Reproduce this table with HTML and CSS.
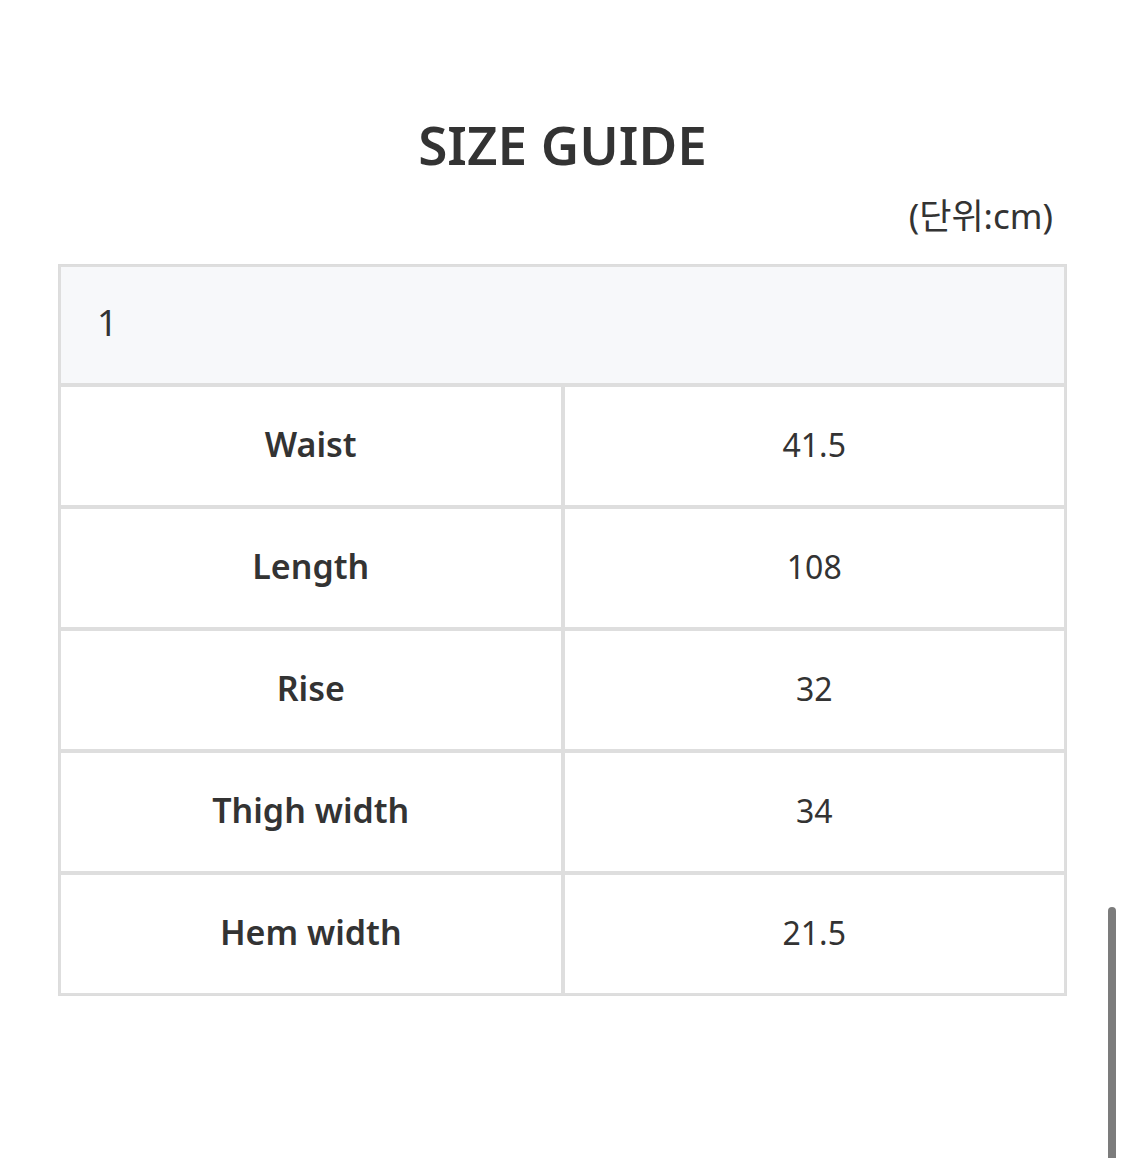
FILE: index.html
```html
<!DOCTYPE html>
<html lang="ko">
<head>
<meta charset="utf-8">
<title>SIZE GUIDE</title>
<link rel="stylesheet" href="styles.css">
</head>
<body>
<div class="page">
  <h1 class="title">SIZE GUIDE</h1>
  <div class="unit">(단위:cm)</div>
  <table class="size-table">
    <thead>
      <tr><th class="size-head" colspan="2">1</th></tr>
    </thead>
    <tbody>
      <tr><td class="label">Waist</td><td class="value">41.5</td></tr>
      <tr><td class="label">Length</td><td class="value">108</td></tr>
      <tr><td class="label">Rise</td><td class="value">32</td></tr>
      <tr><td class="label">Thigh width</td><td class="value">34</td></tr>
      <tr><td class="label">Hem width</td><td class="value">21.5</td></tr>
    </tbody>
  </table>
</div>
<div class="scrollbar"></div>
</body>
</html>
```

FILE: styles.css
```css
html, body {
  margin: 0;
  padding: 0;
  background: #ffffff;
}
body {
  font-family: "Noto Sans", "Noto Sans CJK KR", sans-serif;
  color: #333333;
  height: 1158px;
  overflow: hidden;
  position: relative;
}
.page {
  padding: 108px 58px 0 58px;
}
.title {
  margin: 0;
  text-align: center;
  font-size: 53px;
  font-weight: 600;
  line-height: 74px;
  color: #333333;
}
.unit {
  text-align: right;
  font-size: 35px;
  line-height: 44px;
  margin-top: 12px;
  padding-right: 14px;
  color: #333333;
}
.size-table {
  margin-top: 26px;
  width: 100%;
  border-collapse: separate;
  border-spacing: 0;
  border: 1px solid #dcdcdc;
  table-layout: fixed;
}
.size-table th,
.size-table td {
  border: 2px solid #dedede;
  padding: 0;
}
.size-head {
  height: 110px;
  background: #f7f8fa;
  text-align: left;
  padding-left: 36px !important;
  padding-bottom: 6px !important;
  font-size: 36px;
  font-weight: 400;
  color: #333333;
}
.label,
.value {
  height: 114px;
  padding-bottom: 4px !important;
  text-align: center;
  color: #333333;
}
.label {
  font-size: 34px;
  font-weight: 600;
}
.value {
  font-size: 32px;
  font-weight: 400;
}
.scrollbar {
  position: absolute;
  left: 1108px;
  top: 907px;
  width: 8px;
  height: 260px;
  border-radius: 4px 4px 0 0;
  background: #7c7c7c;
}
```
